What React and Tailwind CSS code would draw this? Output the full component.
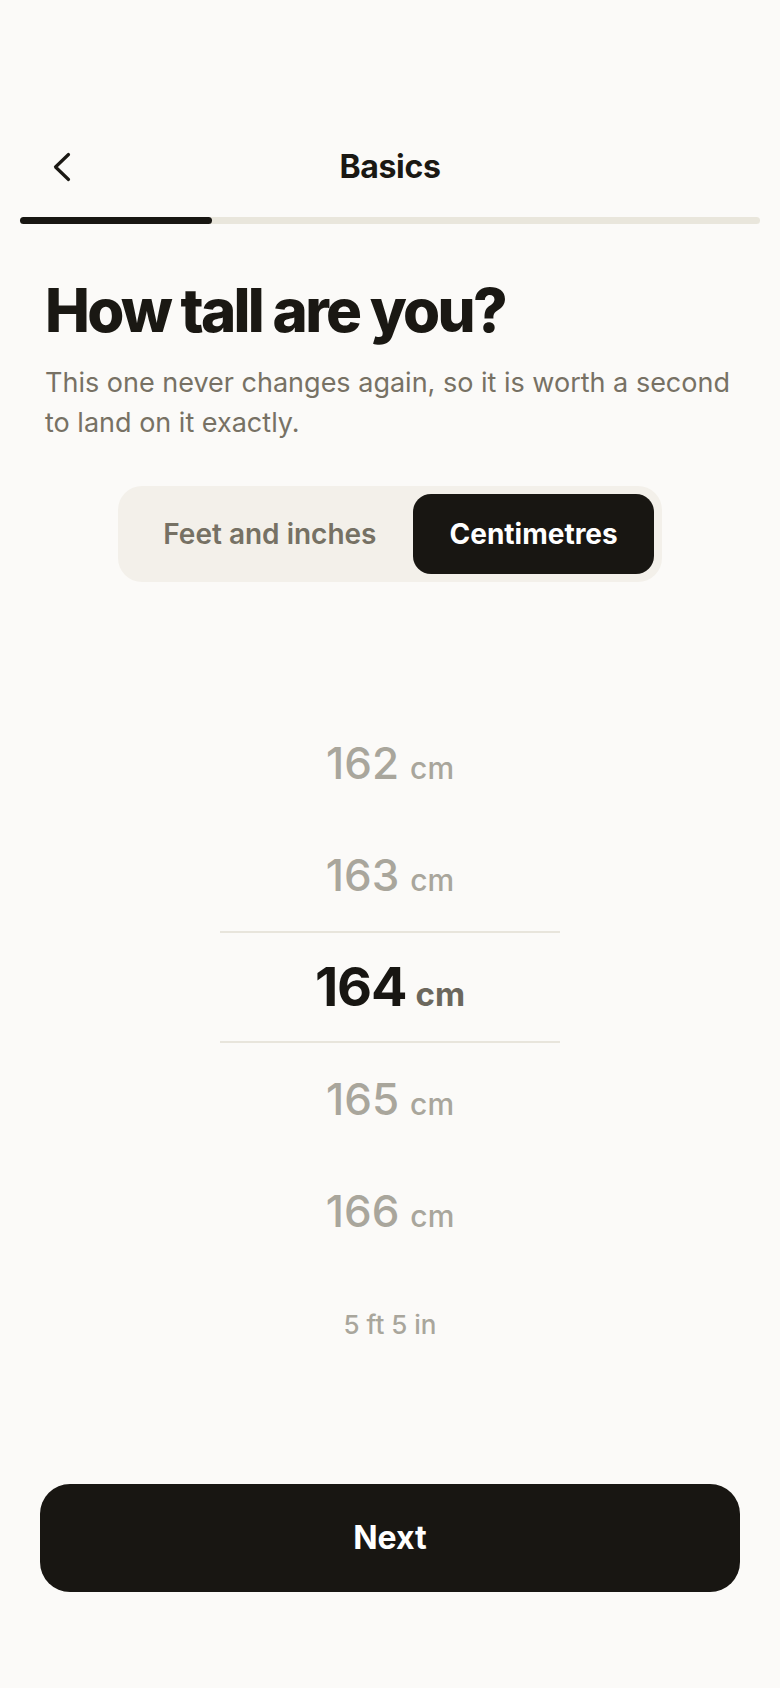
import React from "react";

const rows = [
  { v: 162 },
  { v: 163 },
  { v: 164, sel: true },
  { v: 165 },
  { v: 166 },
];

export default function App() {
  return (
    <div className="min-h-screen bg-[#fbfaf8] font-['Inter',sans-serif] flex flex-col text-[#1a1813]">
      <div className="pt-[139px] px-5">
        <div className="grid grid-cols-[1fr_auto_1fr] items-center h-14">
          <button className="pl-8 flex items-center justify-start">
            <svg width="20" height="30" viewBox="0 0 20 30" fill="none">
              <path d="M16.5 2.5 L3.5 15 L16.5 27.5" stroke="#1a1813" strokeWidth="3.2" strokeLinecap="round" strokeLinejoin="round" />
            </svg>
          </button>
          <div className="text-[32px] font-bold tracking-[-0.01em] text-[#1a1813]">Basics</div>
          <div />
        </div>
        <div className="mt-[22px] h-[7px] rounded-full bg-[#e9e6dc]">
          <div className="h-full w-[26%] rounded-full bg-[#181612]" />
        </div>
      </div>

      <div className="px-[45px]">
        <h1 className="mt-14 text-[60px] leading-[60px] font-extrabold tracking-[-0.045em] text-[#1a1813]">
          How tall are you?
        </h1>
        <p className="mt-[23px] text-[27px] leading-[40px] text-[#777164]">
          This one never changes again, so it is worth a second to land on it exactly.
        </p>
      </div>

      <div className="mt-[43px] self-center flex p-2 rounded-[24px] bg-[#f3f0ea]">
        <button className="h-20 px-[37px] rounded-[18px] text-[28px] font-semibold text-[#767164]">
          Feet and inches
        </button>
        <button className="h-20 px-9 rounded-[18px] bg-[#181612] text-[28px] font-bold text-white">
          Centimetres
        </button>
      </div>

      <div className="mt-[125px] flex flex-col items-center">
        {rows.map((r) =>
          r.sel ? (
            <div
              key={r.v}
              className="w-[340px] h-[112px] border-y-2 border-[#e8e5dc] flex items-center justify-center"
            >
              <div className="flex items-baseline gap-[9px]">
                <span className="text-[54px] leading-none font-bold tracking-[-0.02em] text-[#181612]">{r.v}</span>
                <span className="text-[33px] leading-none font-bold text-[#6b675d]">cm</span>
              </div>
            </div>
          ) : (
            <div key={r.v} className="w-[340px] h-[112px] flex items-center justify-center">
              <div className="flex items-baseline gap-[11px]">
                <span className="text-[44px] leading-none font-medium text-[#a9a69c]">{r.v}</span>
                <span className="text-[30px] leading-none font-medium text-[#a9a69c]">cm</span>
              </div>
            </div>
          )
        )}
        <div className="mt-[42px] text-[26px] leading-8 font-medium text-[#a9a69c]">5 ft 5 in</div>
      </div>

      <div className="px-10 mt-[143px]">
        <button className="w-full h-[108px] rounded-[30px] bg-[#181612] text-white text-[32px] font-bold">
          Next
        </button>
      </div>
    </div>
  );
}
